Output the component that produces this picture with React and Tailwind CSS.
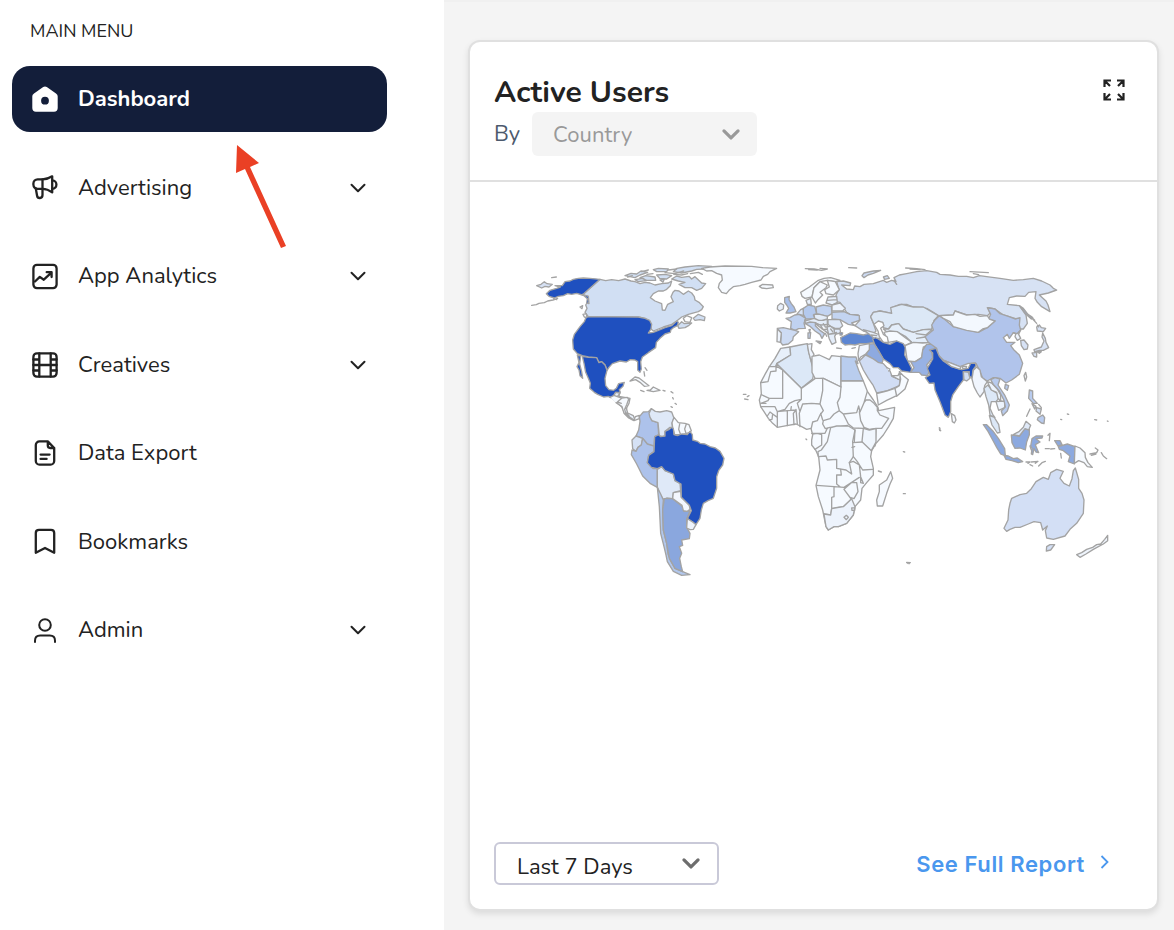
import React from "react";

const BLUE = "#1f50bf";
const PALE = "#f6faff";

// Each map section has its own origin; its units are a third of a pixel.
const sections = [
  {
    at: "translate(525 255) scale(0.33333)",
    shapes: [
      ["#d1dff3", "M225 73 242 77 260 74 281 77 300 72 318 78 330 80 345 86 360 82 375 84 390 90 410 86 430 84 440 78 436 92 425 103 415 108 400 108 385 116 376 128 390 138 410 146 412 165 420 166 428 148 445 140 438 125 444 112 450 106 462 108 475 118 490 108 500 114 508 125 510 135 522 142 535 155 530 164 520 170 490 178 470 186 455 198 440 208 415 216 385 228 378 222 376 205 360 190 340 186 190 185 180 172 186 160 182 150 190 138 190 124 172 120Z"],
      [BLUE, "M64 116 75 106 95 100 106 96 90 92 112 92 120 80 135 78 145 73 160 70 175 69 195 70 225 73 172 120 155 115 140 118 128 116 115 122 100 124 88 129 72 124Z"],
      [BLUE, "M172 118 190 124 192 146 185 144 187 131Z"],
      ["none", "M20 151 34 149 42 145 58 143 68 138 84 135 98 130M86 131 95 134M165 156 173 152 171 161ZM174 178 184 176 186 188 178 186ZM80 68 94 66"],
      ["#d6e1f4", "M35 92 48 88 58 80 66 86 82 88 72 96 60 94 50 99Z"],
      [BLUE, "M188 185 340 186 360 190 374 196 380 208 378 222 370 234 385 232 400 226 420 218 440 212 455 198 460 202 457 212 445 218 438 224 436 232 420 237 405 250 394 262 392 278 370 293 352 306 347 320 349 342 345 352 338 345 338 320 330 315 316 314 304 321 285 318 262 326 252 337 246 346 240 330 230 320 222 323 215 308 190 306 172 302 157 296 145 282 143 255 148 238 165 215 178 200 182 190Z"],
      [BLUE, "M172 304 190 307 215 308 222 323 230 320 240 330 246 346 240 370 242 392 252 404 266 406 274 400 281 386 298 382 294 394 283 404 286 412 272 412 262 430 250 424 236 426 218 418 208 412 194 400 196 385 190 370 182 352 177 325Z"],
      [BLUE, "M157 300 167 303 164 327 170 350 173 370 165 362 162 345 156 335 162 323Z"],
      ["#e8f0fb", "M262 430 272 412 284 414 282 424 315 430 312 445 304 460 308 474 325 482 330 494 322 494 300 476 290 455 275 442ZM282 424 275 442M312 434 290 446 290 455 306 462M304 474 312 482"],
      [PALE, "M315 378 330 366 342 369 372 392 358 394 345 382 332 374ZM366 406 376 405 385 396 405 406 385 410Z"],
      ["none", "M347 406 357 410M414 406 420 408M438 410 444 414M443 428 445 432M438 455 442 457M450 445 454 448M360 338 366 346M357 350 359 363"],
      ["#d1dff3", "M440 72 455 63 470 67 492 64 500 72 510 65 530 84 542 86 530 100 515 106 500 98 480 98 462 88 480 82 460 78ZM445 50 456 40 480 36 520 32 560 34 540 42 515 43 500 48 470 54ZM300 62 318 55 335 57 348 48 368 52 345 60 330 68ZM345 68 362 62 390 66 392 76 365 76ZM385 44 400 40 430 42 425 50 395 50ZM395 60 420 58 440 62 425 72 404 70ZM405 75 418 72 414 82ZM330 74 354 70 364 77 340 80Z"],
      ["none", "M350 50 370 45M420 53 450 56 476 48M430 45 455 42M308 66 322 62M366 58 384 56M446 58 470 60 488 56M496 56 520 52 532 58"],
      ["#d1dff3", "M458 212 470 200 478 206 500 204 492 211 480 218 462 220ZM505 190 520 178 540 186 538 197 525 194 510 196Z"],
      ["#ffffff", "M475 190 485 182 500 188 495 202 480 200Z"],
      [PALE, "M530 40 555 36 600 33 680 34 712 38 755 40 735 50 728 58 715 64 708 75 680 82 660 88 645 92 625 95 612 106 604 116 590 112 580 98 583 85 592 75 590 60 575 55 560 47 545 48Z"],
    ],
  },
  {
    at: "translate(610 390) scale(0.33333)",
    shapes: [
      [PALE, "M0 22 12 16 22 20 35 24 52 22 56 28 50 44 44 58 48 74 60 82 72 90 76 80 88 76 88 86 72 92 56 84 42 70 36 50 18 38M22 20 30 10M34 40 22 36 36 24"],
      ["#adc2eb", "M124 56 115 65 100 66 88 80 90 94 86 120 78 138 98 145 112 162 132 170 134 140 146 135 144 98 125 92 120 75Z"],
      ["#dfe9f8", "M124 56 117 70 120 82 126 92 144 98 148 138 158 140 165 138 165 124 180 112 188 112 186 100 192 85 185 66 170 62 150 66 136 64Z"],
      [PALE, "M192 82 205 98 225 100 237 104 244 122 238 128 215 134 194 134 188 112 186 98ZM209 102 206 118 212 134M229 102 224 117 228 130"],
      ["#d5e1f5", "M78 138 98 145 94 165 84 172 78 184 68 176 66 150Z"],
      ["#adc2eb", "M98 145 112 162 132 168 132 185 116 196 112 218 130 236 142 236 142 292 120 280 98 258 80 222 64 194 66 180 78 184 84 172 94 165Z"],
      ["#dfe9f8", "M142 238 155 230 165 242 190 252 195 272 210 280 212 302 190 308 188 326 170 324 160 328 148 310 142 292Z"],
      ["#b1c7ed", "M142 292 152 312 160 330 158 360 160 420 170 460 174 492 182 512 195 535 218 545 240 554 215 556 190 544 172 515 168 495 162 470 152 430 150 390 148 350Z"],
      ["#8aa7de", "M163 326 188 326 218 350 222 364 240 362 230 388 230 412 240 430 238 446 215 450 218 466 208 470 215 490 209 505 214 530 218 545 195 535 178 505 170 460 160 420 158 360Z"],
      ["#f3f7fe", "M190 308 212 304 214 322 238 346 240 358 232 364 220 362 216 346 188 326Z"],
      [BLUE, "M134 140 146 134 152 140 165 138 165 124 178 118 186 112 190 116 192 134 202 137 215 132 232 134 240 124 247 134 248 150 262 154 270 160 285 162 300 170 316 174 330 184 342 205 338 225 326 242 320 260 320 295 310 325 294 332 280 340 274 360 270 385 258 404 248 396 232 386 244 362 238 346 214 322 213 282 195 272 190 252 165 242 155 230 142 236 124 232 112 218 116 196 132 185Z"],
      ["#eef4fd", "M232 386 248 396 258 404 250 418 240 419 230 414Z"],
    ],
  },
  {
    at: "translate(740 255) scale(0.33333)",
    shapes: [
      [PALE, "M58 94 68 88 98 90 100 98 80 101 65 99Z"],
      ["#d7e2f4", "M290 80 310 78 332 84 330 92 305 90 320 102 340 104 344 93 360 95 372 88 400 86 430 76 440 82 455 76 468 80 462 68 478 60 500 56 530 50 560 47 590 52 600 58 630 60 655 64 680 64 700 68 718 62 740 65 780 70 820 76 850 74 880 70 905 78 930 90 940 100 950 105 925 114 898 120 918 138 924 150 930 170 905 155 892 142 885 130 888 110 866 112 855 124 830 123 808 128 802 148 838 152 848 166 858 180 862 205 850 222 838 222 838 205 825 190 790 180 765 162 745 158 750 175 742 182 715 178 680 180 645 168 640 180 595 182 580 172 560 160 520 156 500 148 480 148 455 158 455 175 420 168 400 172 392 185 400 205 408 228 400 236 370 228 345 212 360 195 355 180 330 178 320 172 312 160 300 142 290 140 288 120 297 104Z"],
      ["#ccdaf2", "M366 62 372 54 400 48 422 46 400 55 384 60 372 68ZM430 66 442 62 448 70 434 73Z"],
      ["none", "M196 41 222 42 245 46 262 42 240 40M206 44 232 45M326 38 350 39M497 39 530 41 555 44M510 42 540 44M690 50 745 53M700 56 716 59M462 76 470 88"],
      [PALE, "M182 112 208 96 235 76 252 70 272 68 300 76 286 80 262 76 240 80 222 98 216 126 195 130 186 124Z"],
      [PALE, "M222 98 240 80 262 90 258 98 240 112 248 120 234 134 226 144 216 126Z"],
      [PALE, "M262 76 286 80 298 104 280 120 258 116 254 104 268 96Z"],
      ["#e9f1fc", "M264 126 290 124 292 142 276 150 258 144ZM262 136 290 134M198 136 212 130 214 148 202 148Z"],
      ["#a9c0ea", "M134 128 148 124 147 134 154 146 162 156 168 170 150 174 138 174 146 160 140 150 134 142Z"],
      ["#eaf1fc", "M113 152 122 145 131 150 130 162 118 168 112 162Z"],
      ["#c0d2f0", "M150 188 164 180 178 178 198 190 192 204 196 220 176 221 165 226 152 220 154 200 138 190Z"],
      ["#cddbf3", "M112 220 130 218 165 226 176 230 160 245 158 256 145 267 128 270 122 262 124 234Z"],
      ["#eef4fd", "M112 222 124 234 121 262 111 260Z"],
      ["#d5e1f5", "M170 178 182 164 190 160 192 182 178 178Z"],
      ["#b4c9ed", "M190 160 205 150 224 154 230 176 220 180 226 192 198 192 190 178Z"],
      ["#c3d4f1", "M228 156 250 150 274 154 276 176 262 184 230 176Z"],
      ["#e4edf9", "M222 178 240 178 262 184 262 192 250 196 236 196 224 190ZM194 198 222 190 236 196 246 196 262 192 262 208 242 212 228 204 196 205Z"],
      ["#c3d4f1", "M276 172 312 170 330 178 358 182 358 196 335 204 345 212 325 208 300 194 276 192Z"],
      ["#eef4fd", "M276 150 300 144 316 160 308 168 276 168Z"],
      ["#dfe9f8", "M264 194 300 194 308 212 300 220 285 220 264 210ZM282 222 300 222 302 234 284 238Z"],
      ["#c3d4f1", "M196 206 210 201 227 203 226 212 240 226 254 236 246 250 240 238 225 228 210 214ZM228 258 244 260 240 266ZM204 234 212 232 210 250 204 250ZM207 224 211 223 209 230Z"],
      ["#e4edf9", "M226 206 242 210 264 208 282 222 284 236 266 238 258 230 244 220ZM242 212 250 224 262 222M262 210 262 222 266 238M264 238 290 232 284 244 288 262 276 268 268 252ZM250 206 256 216 270 214M272 222 278 230"],
      ["none", "M290 279 304 281M336 280 346 278M194 195 196 206M256 235 260 244"],
      ["#5d86d2", "M300 232 308 234 306 240 300 240ZM302 248 318 240 330 234 350 236 370 240 385 236 396 240 402 250 402 262 380 266 360 266 345 270 330 268 315 270 304 262Z"],
      ["#e7effa", "M370 224 400 232 420 240 422 250 402 250 386 236ZM394 240 410 242"],
      ["#dce8f6", "M392 185 400 172 420 168 455 175 452 158 485 148 520 156 550 156 595 182 582 196 575 222 550 224 520 232 490 222 476 206 455 210 445 222 430 218 428 202 402 208Z"],
      ["#e4eefa", "M430 222 446 222 455 210 476 206 490 222 520 232 550 224 576 224 560 238 570 250 575 262 545 264 515 262 496 244 470 230 445 235ZM528 236 560 240M530 250 555 246"],
      [PALE, "M432 232 450 228 472 230 496 248 515 262 495 272 470 258 445 262Z"],
      ["#ffffff", "M402 208 415 198 428 202 432 212 422 220 430 238 442 246 445 262 430 262 418 245 414 228Z"],
      [PALE, "M495 272 520 262 548 264 578 262 550 276 548 290 545 308 526 320 502 318Z"],
      ["#98b2e4", "M512 352 522 338 512 320 526 320 545 308 548 285 560 268 575 268 588 280 575 290 578 308 560 330 568 350 562 362 545 360 538 352Z"],
      [BLUE, "M398 252 406 248 415 252 430 262 450 268 470 258 490 266 496 278 494 300 505 320 515 340 512 352 485 348 475 338 460 338 450 326 430 312 415 285 404 268Z"],
      ["#8eaae0", "M385 268 402 266 415 288 430 312 426 325 414 322 400 312 378 298 388 284Z"],
      ["#f1f6fe", "M358 272 388 266 388 284 376 298 362 306 356 316 354 296Z"],
      ["#d1ddf4", "M358 318 376 300 400 312 414 322 430 326 450 348 456 364 480 375 478 392 440 408 410 414 400 392 385 370 370 345Z"],
      [PALE, "M410 416 440 408 465 400 470 422 440 436 415 450ZM478 392 482 372 478 350 490 362 505 374 495 402 470 424 465 400ZM454 362 474 362 480 350 480 375ZM440 338 450 342 446 348"],
      ["#e8f0fa", "M122 280 150 276 152 300 110 326 108 334 88 335 105 310Z"],
      ["#dce8f7", "M110 326 152 300 150 276 180 270 202 266 206 290 216 330 222 350 218 372 184 400Z"],
      ["#eef4fd", "M202 268 216 266 214 284 222 298 214 320 206 292Z"],
      ["#f3f8fe", "M216 304 238 300 268 314 275 302 303 305 303 396 250 370 226 372 216 352Z"],
      ["#b9cdee", "M303 303 326 306 348 306 354 326 346 318 356 346 370 378 303 378Z"],
    ],
  },
  {
    at: "translate(740 360) scale(0.33333)",
    shapes: [
      [PALE, "M62 68 75 43 88 20 108 20 110 12 184 85 226 55 250 55 303 81 303 63 370 63 382 94 400 120 414 142 416 152 464 142 460 175 446 200 430 225 408 250 395 272 392 290 400 325 400 345 380 368 366 385 362 420 345 440 340 465 320 490 295 500 282 500 265 510 258 500 248 450 235 410 228 376 240 330 236 290 228 272 215 255 215 240 218 225 213 205 200 208 185 200 168 192 140 197 112 202 98 190 85 175 72 155 62 140 58 120 64 102Z"],
      ["none", "M62 68 84 65 92 35 108 33 108 20M108 18 128 30 128 115 88 115 64 104M128 115 88 115 84 122 62 130M62 140 85 140 105 140 112 155 135 148 148 130 165 122 184 118 184 85M66 130 78 130M82 168 90 156 98 162 96 178 88 180M98 162 112 172M112 155 112 202M112 155 142 152 142 197M142 152 168 150 160 160 162 194M168 148 172 192M152 152 154 140M180 200 178 160 188 132 215 130 240 132 248 92 248 58M184 118 172 130 180 155M240 132 250 152 240 165 232 182 218 186 214 204M248 180 242 160M303 81 300 112 292 128 298 152 282 162 270 176 250 182 248 192 256 206 270 202 290 202 322 196M298 152 310 162 350 158 356 138 360 156 372 128 382 94M310 162 325 192 340 204 370 205 386 212M372 128 378 120 390 120 400 128 412 142 412 152 420 165 446 175 425 205 408 205 388 208 372 202 362 182 358 155M408 205 405 258"],
      ["#f3f8fe", "M235 290 234 275 244 270 262 245 272 203 290 198 325 198 345 210 338 245 340 290 328 308 335 342 318 330 290 325 290 298 262 300 258 288Z"],
      ["#f0f6fd", "M370 205 388 210 408 206 408 246 394 272 366 245Z"],
      ["none", "M215 220 255 220 262 205M218 222 232 220 245 224 245 255 225 268M338 248 366 246M336 262 344 260M345 210 343 244M340 290 352 305 368 330 398 328M328 308 340 304 358 315 362 350 370 370 362 368 362 350M230 376 282 380 312 382 334 368 358 352M300 380 290 372 290 345 304 345 302 328M312 388 334 368 350 368 354 395 342 416 330 412ZM282 382 282 410 275 412 275 446 292 442 310 440 334 418 312 388M275 446 272 465 252 462"],
      ["#edf3fc", "M252 462 272 465 275 446 310 440 335 416 345 440 340 465 320 490 295 500 282 500 265 510 258 500ZM312 472 319 466 325 472 319 479ZM335 444 345 443 344 451 336 451Z"],
      [PALE, "M452 335 458 355 450 372 440 400 428 438 412 438 410 420 418 395 418 375 440 360Z"],
      ["none", "M10 103 18 103M22 110 27 107M14 117 24 119M198 237 200 239M490 275 494 276M415 333 424 336M490 401 496 401M500 607 511 608M502 610 508 611"],
    ],
  },
  {
    at: "translate(900 255) scale(0.33333)",
    shapes: [
      ["#b1c4eb", "M118 182 130 190 160 215 235 232 262 218 285 198 264 195 272 178 262 158 285 162 300 176 325 184 345 192 360 188 358 210 362 225 350 238 340 233 328 250 322 238 310 248 320 262 345 262 332 272 342 285 358 300 368 325 362 345 358 358 335 375 318 384 300 370 280 368 262 378 248 370 238 345 228 325 205 325 180 335 155 325 130 315 115 300 110 280 85 262 75 245 100 225 95 210 104 196Z"],
      ["#f3f8fe", "M118 182 160 180 165 168 182 174 200 180 225 178 240 184 262 182 268 192 285 198 262 218 248 222 235 232 200 226 160 215 150 200 130 190Z"],
      [BLUE, "M88 285 108 280 114 295 118 304 130 318 155 335 185 344 205 340 212 325 226 324 228 332 219 345 216 370 207 362 208 350 190 350 190 375 175 395 158 420 152 440 152 470 145 487 135 480 120 440 105 405 102 384 88 385 76 368 90 360 82 340 98 312 98 294Z"],
      ["#eef4fd", "M130 316 155 325 182 336 180 343 155 335ZM186 334 200 334 198 340 188 340Z"],
      ["#d1def4", "M190 350 205 352 210 370 200 378 192 375Z"],
      ["#f0f5fd", "M230 336 240 345 244 365 262 380 254 392 252 410 240 426 232 414 222 395 216 372 220 346Z"],
      ["#dce8f7", "M252 400 264 390 275 405 292 415 296 430 288 440 274 440 270 460 278 478 285 488 270 480 266 450 258 425ZM268 482 282 486 296 508 300 532 292 534 276 510Z"],
      ["#edf4fd", "M262 380 275 384 292 402 302 420 302 438 294 430 290 412 274 405ZM288 440 315 438 314 458 296 466Z"],
      ["#b8cbee", "M272 374 285 368 300 372 294 390 315 422 328 450 322 468 308 482 304 468 316 456 312 436 298 408 280 388ZM316 388 326 392 322 406 314 400Z"],
      [PALE, "M372 362 377 352 380 366 376 378ZM154 476 164 482 168 495 163 504 157 500Z"],
      ["#eef4fd", "M362 225 356 238 362 250 352 256 345 245 348 235 340 233 352 236Z"],
      ["#d7e2f5", "M362 256 372 255 384 270 382 282 372 284 364 272ZM428 234 436 250 438 262 446 278 430 286 418 286 404 290 402 284 424 276 432 258 426 246ZM396 294 410 292 410 306 402 304ZM412 290 424 290 418 295ZM410 216 418 210 424 218 437 220 430 230 412 228Z"],
      ["#9ba9c4", "M358 152 370 160 384 178 398 188 394 192 378 178Z"],
      ["none", "M398 192 410 205M412 210 416 216M392 184 404 196M118 522 122 527"],
      ["#b8cbee", "M388 405 398 408 398 430 412 445 400 445 386 430ZM414 488 428 480 434 488 432 506 424 504 412 494Z"],
      ["#d5e1f5", "M396 446 408 454 404 462ZM410 458 424 462 420 478 408 468ZM416 448 424 458"],
      ["none", "M380 484 390 462M482 493 485 494M502 477 506 478M584 494 590 495M622 498 624 499"],
    ],
  },
  {
    at: "translate(930 400) scale(0.33333)",
    shapes: [
      ["#8ca9df", "M160 74 170 74 188 92 205 115 224 146 226 168 212 162 200 142 188 120 174 94ZM222 166 235 168 250 176 262 174 278 185 265 188 246 182 228 178ZM244 105 268 108 285 85 298 88 298 104 290 126 286 150 270 144 255 145 246 128ZM306 116 318 108 338 108 336 114 318 116 330 126 316 134 326 158 318 156 312 146 308 164 304 162 306 144 302 138ZM374 122 390 122 396 134 384 138ZM385 140 412 132 435 140 433 192 415 185 420 168 400 152 388 148Z"],
      ["#dfe9f8", "M250 104 268 94 280 82 288 64 302 76 296 90 285 86 268 108Z"],
      [PALE, "M435 138 450 144 465 158 466 172 474 188 487 202 472 200 462 188 446 182 433 190Z"],
      ["none", "M288 186 300 186 294 190M304 186 324 184 316 190M300 194 308 198M326 198 336 188 346 184M354 106 360 100 358 122M346 146 358 146M362 147 374 146M392 160 394 174M480 162 500 158 504 150M484 166 498 162M496 144 504 150M514 158 520 168 530 176M300 138 304 150M28 83 30 85M29 91 31 92"],
      ["#d3dff5", "M222 385 234 360 236 330 240 310 245 295 270 284 290 280 304 266 318 245 340 232 355 238 362 218 380 208 400 214 390 235 402 250 418 258 426 236 430 212 436 204 446 238 446 265 456 280 462 300 460 340 440 370 420 388 405 408 370 418 350 414 346 392 352 378 338 390 332 368 312 365 295 372 270 382 255 382 240 388 230 394Z"],
      ["#d3dff5", "M350 440 360 434 374 434 362 450 349 453Z"],
      ["#eff5fd", "M440 464 455 458 470 448 488 442 500 434 512 432 524 418 533 406 533 422 520 432 505 440 490 448 468 462 450 472Z"],
    ],
  },
];

function WorldMap() {
  return (
    <svg viewBox="526 260 584 322" className="block h-[322px] w-[584px]" fill="none" stroke="#a3a3a3" strokeWidth="4" strokeLinejoin="round" strokeLinecap="round">
      {sections.map((s) => (
        <g key={s.at} transform={s.at}>
          {s.shapes.map(([fill, d]) => <path key={d} fill={fill} d={d} />)}
        </g>
      ))}
    </svg>
  );
}

const line = { fill: "none", stroke: "currentColor", strokeWidth: 2.3, strokeLinecap: "round", strokeLinejoin: "round" };

const icons = {
  home: <path fill="currentColor" fillRule="evenodd" d="M13 .4c.7 0 1.200.2 1.800.6l9.200 6.400c1.100.8 1.700 1.700 1.700 3.100v11.600c0 2.400-1.300 3.700-3.700 3.700H4c-2.400 0-3.700-1.300-3.700-3.700V10.500c0-1.400.6-2.300 1.700-3.100L11.200 1c.6-.4 1.100-.6 1.800-.6ZM13 10.800a3.900 3.900 0 1 0 0 7.800 3.900 3.900 0 0 0 0-7.800Z" />,
  horn: <g {...line}><path d="M10.500 4.300H5.600C3.200 4.300 1.400 6.100 1.400 8.500v1.100c0 2.400 1.800 4.200 4.200 4.200h4.900c3.400 0 6.700 1.300 9.700 3.600V1.300c-3 2-6.300 3-9.700 3Z" /><path d="M10.500 4.300v15.800c0 3.700-4.900 3.800-5.400.7L3.800 13.600M20.200 5.300c5.600 0 5.600 8.600 0 8.600" /></g>,
  chart: <g {...line}><rect x="1.400" y="1.900" width="23.200" height="23.200" rx="3.500" /><path d="M3 18.500l4.800-4.600 4 2.800 7.600-7M14.700 9.200h4.900v4.900" /></g>,
  film: <g {...line}><rect x="1.400" y="1.400" width="23.200" height="23.200" rx="3.500" /><path d="M7.300 1.400v23.200M18.700 1.400v23.200M7.300 13h11.400M1.400 7.500h5.900M1.400 13h5.900M1.400 18.500h5.900M18.700 7.500h5.900M18.700 13h5.900M18.700 18.500h5.900" /></g>,
  file: <g {...line}><path d="M15.800 1.400H7.500a3.700 3.700 0 0 0-3.700 3.700v15.800a3.700 3.700 0 0 0 3.700 3.700h11a3.700 3.700 0 0 0 3.700-3.700V8ZM15.800 1.400v4.200c0 1.600.8 2.400 2.400 2.400h4M8.600 14.600h9M8.600 18.900h6" /></g>,
  bookmark: <g {...line}><path d="M3.800 23.800V4.100c0-2.200 1-3.200 3.200-3.200h12c2.200 0 3.200 1 3.200 3.200v19.700L13 19Z" /></g>,
  user: <g {...line} strokeWidth="2"><circle cx="13" cy="8" r="5.800" /><path d="M3 25v-1.200c0-3.300 2-5.200 5.200-5.200h9.600c3.200 0 5.200 1.900 5.200 5.200V25" /></g>,
};

const items = [
  { label: "Dashboard", icon: "home", active: true },
  { label: "Advertising", icon: "horn", more: true },
  { label: "App Analytics", icon: "chart", more: true },
  { label: "Creatives", icon: "film", more: true },
  { label: "Data Export", icon: "file" },
  { label: "Bookmarks", icon: "bookmark" },
  { label: "Admin", icon: "user", more: true },
];

function Chevron({ className, width = 2 }) {
  return (
    <svg viewBox="0 0 18 12" className={className} fill="none" stroke="currentColor" strokeWidth={width} strokeLinecap="round" strokeLinejoin="round">
      <path d="m2.500 2.700 6.500 6.500 6.500-6.500" />
    </svg>
  );
}

function Sidebar() {
  return (
    <aside className="w-[444px] shrink-0 bg-white">
      <div className="h-[66px] pl-[30px] pt-[19px] text-[18px] leading-6">MAIN MENU</div>
      <nav className="flex w-[387px] flex-col gap-[22.5px] pl-3">
        {items.map((it) => (
          <a key={it.label} className={it.active ? "flex h-[66px] items-center rounded-[18px] bg-[#131e3a] pl-5 pr-5 font-bold text-white" : "flex h-[66px] items-center pl-5 pr-5"}>
            <svg viewBox="0 0 26 26" className="mr-5 size-[26px] shrink-0 overflow-visible">{icons[it.icon]}</svg>
            <span className="flex-1 text-[22px] leading-[30px]">{it.label}</span>
            {it.more && <Chevron className="h-3 w-[18px]" />}
          </a>
        ))}
      </nav>
    </aside>
  );
}

export default function App() {
  return (
    <div className="relative flex h-[930px] w-[1174px] overflow-hidden bg-[#f4f4f4] font-[Nunito,Lato,sans-serif] text-[#222]">
      <Sidebar />
      <main className="flex-1 border-t-2 border-[#f0f0f0] pl-[24px] pt-[38px]">
        <section className="flex h-[871px] w-[691px] flex-col rounded-xl border-2 border-[#e0e0e0] bg-white shadow-[0_3px_6px_rgba(0,0,0,0.1)]">
          <header className="flex h-[140px] justify-between border-b-2 border-[#e0e0e0] pl-[24px] pr-[32px] pt-[30px]">
            <div>
              <h1 className="h-10 pt-px text-[30px] font-bold leading-10">Active Users</h1>
              <div className="flex items-center">
                <span className="w-[38px] text-[22px] text-[#4c596d]">By</span>
                <button className="flex h-11 w-[225px] items-center justify-between rounded-md bg-[#f4f4f4] pl-[21px] pr-4 text-[#999]">
                  <span className="pt-0.5 text-[22px] tracking-[0.1px]">Country</span>
                  <Chevron className="h-[13px] w-5" width={3} />
                </button>
              </div>
            </div>
            <svg viewBox="0 0 22 22" className="mt-[7px] size-[22px]" fill="none" stroke="currentColor" strokeWidth="2.200">
              <path d="M1.500 8V1.500H8M1.500 1.500l5.500 5.500M14 1.500h6.500V8M20.500 1.500 15 7M1.500 14v6.500H8M1.500 20.500 7 15M14 20.500h6.500V14M20.500 20.500 15 15" />
            </svg>
          </header>
          <div className="flex-1 pl-[56px] pt-[78px]">
            <WorldMap />
          </div>
          <footer className="flex h-[67px] items-start justify-between pl-[24px] pr-[48px]">
            <button className="flex h-[43px] w-[225px] items-center justify-between rounded-md border-2 border-[#c9c9d8] bg-white pl-[21px] pr-4">
              <span className="pt-[7px] text-[22px]">Last 7 Days</span>
              <Chevron className="h-[13px] w-5 text-[#6d6d6d]" width={3} />
            </button>
            <a className="flex h-[43px] items-center gap-[15px] text-[#4a97ee]">
              <span className="pt-0.5 font-[Inter,sans-serif] text-[22px] font-semibold tracking-[0.6px]">See Full Report</span>
              <svg viewBox="0 0 9 14" className="mb-1 h-[14px] w-[9px]" fill="none" stroke="currentColor" strokeWidth="1.800"><path d="m1.500 1 6 6-6 6" /></svg>
            </a>
          </footer>
        </section>
      </main>
      <svg viewBox="0 0 60 110" className="absolute left-[230px] top-[140px] h-[110px] w-[60px]" fill="#ea4025">
        <path d="m7 5 22 18-9 4 36 79-5 2L15 29l-9 4Z" />
      </svg>
    </div>
  );
}
